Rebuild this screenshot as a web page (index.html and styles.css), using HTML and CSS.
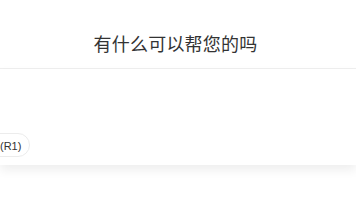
FILE: index.html
```html
<!DOCTYPE html>
<html lang="zh">
<head>
<meta charset="utf-8">
<link rel="stylesheet" href="styles.css">
</head>
<body>
<div class="page">
  <header class="header">
    <h1 class="title">有什么可以帮您的吗</h1>
  </header>
  <section class="composer">
    <div class="toolbar">
      <span class="chip">深度思考(R1)</span>
    </div>
  </section>
</div>
</body>
</html>
```
FILE: styles.css
```css
html, body {
  margin: 0;
  padding: 0;
  background: #ffffff;
  overflow: hidden;
}
.page {
  width: 356px;
  height: 200px;
  font-family: "Noto Sans CJK SC", "Noto Sans", sans-serif;
}
.header {
  height: 69px;
  display: flex;
  align-items: center;
  justify-content: center;
  border-bottom: 1px solid #efefef;
  box-sizing: border-box;
}
.title {
  margin: 0 5px 0 0;
  padding-top: 18px;
  font-size: 18px;
  font-weight: 400;
  color: #333333;
  letter-spacing: 0.2px;
}
.composer {
  height: 96px;
  background: #ffffff;
  box-shadow: 0 5px 10px rgba(0, 0, 0, 0.07);
  display: flex;
  flex-direction: column;
  justify-content: flex-end;
  padding-bottom: 8px;
  box-sizing: border-box;
}
.toolbar {
  display: flex;
  margin-left: -53px;
}
.chip {
  height: 24px;
  display: inline-flex;
  align-items: center;
  padding: 0 8px;
  border: 1px solid #ececec;
  border-radius: 12px;
  font-family: "Liberation Sans", "Noto Sans CJK SC", sans-serif;
  font-size: 11px;
  color: #333333;
  box-sizing: border-box;
}
```
